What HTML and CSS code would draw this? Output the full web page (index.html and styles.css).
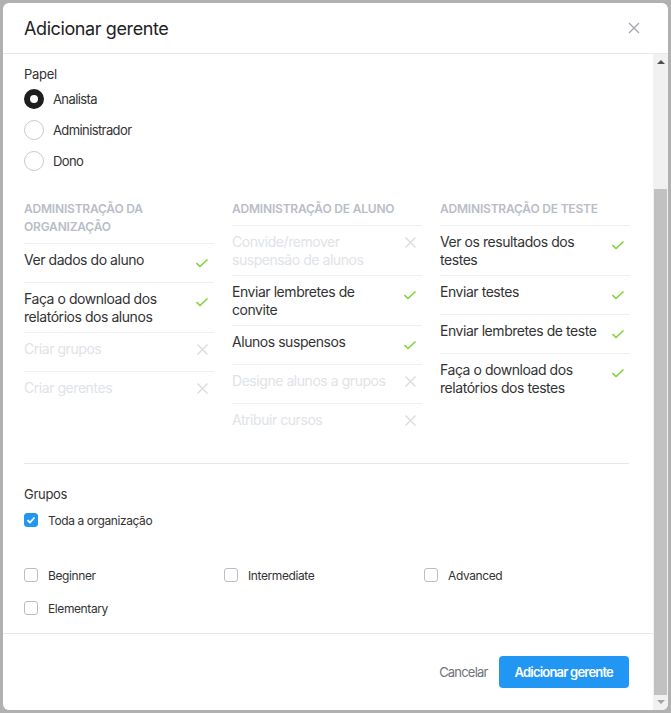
FILE: index.html
```html
<!DOCTYPE html>
<html lang="pt">
<head>
  <meta charset="UTF-8">
  <meta name="viewport" content="width=device-width, initial-scale=1.0">
  <title>Adicionar gerente</title>
  <link rel="stylesheet" href="styles.css">
</head>
<body>
  <div class="modal">
    <div class="modal-header">
      <h2>Adicionar gerente</h2>
      <button class="close" aria-label="Fechar">
        <svg width="12" height="12" viewBox="0 0 12 12"><path d="M1 1L11 11M11 1L1 11" stroke="#a4a9b1" stroke-width="1.4" fill="none"/></svg>
      </button>
    </div>

    <div class="modal-main">
      <div class="modal-body">
        <div class="fields">
          <input type="text" aria-label="Nome">
          <input type="email" aria-label="E-mail">
        </div>

        <div class="role">
          <div class="label">Papel</div>
          <label class="radio checked"><span class="circle"></span>Analista</label>
          <label class="radio"><span class="circle"></span>Administrador</label>
          <label class="radio"><span class="circle"></span>Dono</label>
        </div>

        <div class="permissions">
          <div class="perm-col">
            <div class="perm-title">Administração da organização</div>
            <div class="perm-row"><span>Ver dados do aluno</span><i class="yes"></i></div>
            <div class="perm-row"><span>Faça o download dos relatórios dos alunos</span><i class="yes"></i></div>
            <div class="perm-row off"><span>Criar grupos</span><i class="no"></i></div>
            <div class="perm-row off"><span>Criar gerentes</span><i class="no"></i></div>
          </div>
          <div class="perm-col">
            <div class="perm-title">Administração de aluno</div>
            <div class="perm-row off"><span>Convide/remover suspensão de alunos</span><i class="no"></i></div>
            <div class="perm-row"><span>Enviar lembretes de convite</span><i class="yes"></i></div>
            <div class="perm-row"><span>Alunos suspensos</span><i class="yes"></i></div>
            <div class="perm-row off"><span>Designe alunos a grupos</span><i class="no"></i></div>
            <div class="perm-row off"><span>Atribuir cursos</span><i class="no"></i></div>
          </div>
          <div class="perm-col">
            <div class="perm-title">Administração de teste</div>
            <div class="perm-row"><span>Ver os resultados dos testes</span><i class="yes"></i></div>
            <div class="perm-row"><span>Enviar testes</span><i class="yes"></i></div>
            <div class="perm-row"><span>Enviar lembretes de teste</span><i class="yes"></i></div>
            <div class="perm-row"><span>Faça o download dos relatórios dos testes</span><i class="yes"></i></div>
          </div>
        </div>

        <div class="groups">
          <div class="label">Grupos</div>
          <label class="checkbox checked all"><span class="box"></span>Toda a organização</label>
          <div class="group-list">
            <label class="checkbox"><span class="box"></span>Beginner</label>
            <label class="checkbox"><span class="box"></span>Intermediate</label>
            <label class="checkbox"><span class="box"></span>Advanced</label>
            <label class="checkbox"><span class="box"></span>Elementary</label>
          </div>
        </div>

        <div class="modal-footer">
          <button class="cancel">Cancelar</button>
          <button class="submit">Adicionar gerente</button>
        </div>
      </div>

      <div class="scrollbar">
        <span class="arrow up"></span>
        <div class="track"><div class="thumb"></div></div>
        <span class="arrow down"></span>
      </div>
    </div>
  </div>

  <script src="script.js"></script>
</body>
</html>
```

FILE: styles.css
```css
* {
  box-sizing: border-box;
}

body {
  font-family: Inter, "Liberation Sans", sans-serif;
  margin: 0;
  padding: 3px;
  background-color: #b1b1b1;
  color: #333;
  height: 713px;
  overflow: hidden;
}

.modal {
  width: 665px;
  height: 707px;
  background: #fff;
  border-radius: 6px;
  display: flex;
  flex-direction: column;
  overflow: hidden;
}

.modal-header {
  height: 51px;
  flex-shrink: 0;
  display: flex;
  align-items: center;
  justify-content: space-between;
  padding: 0 28px 0 21px;
  border-bottom: 1px solid #e6e7ea;
}

.modal-header h2 {
  margin: 0;
  font-size: 18px;
  font-weight: 400;
  letter-spacing: -0.4px;
  color: #222;
}

.close {
  background: none;
  border: none;
  padding: 0;
  cursor: pointer;
  display: flex;
}

.modal-main {
  flex: 1;
  min-height: 0;
  display: flex;
}

.modal-body {
  flex: 1;
  overflow-y: scroll;
  scrollbar-width: none;
  padding: 0 0 0 21px;
}

.modal-body::-webkit-scrollbar {
  display: none;
}

/* drawn scrollbar, like the desktop one */
.scrollbar {
  width: 15px;
  flex-shrink: 0;
  background: #f1f1f1;
  display: flex;
  flex-direction: column;
}

.scrollbar .arrow {
  height: 15px;
  flex-shrink: 0;
  background-repeat: no-repeat;
  background-position: center;
}

.scrollbar .up {
  background-image: url("data:image/svg+xml,%3Csvg xmlns='http://www.w3.org/2000/svg' width='8' height='5' viewBox='0 0 8 5'%3E%3Cpath d='M0 5L4 1L8 5Z' fill='%23505050'/%3E%3C/svg%3E");
}

.scrollbar .down {
  background-image: url("data:image/svg+xml,%3Csvg xmlns='http://www.w3.org/2000/svg' width='8' height='5' viewBox='0 0 8 5'%3E%3Cpath d='M0 0L4 4L8 0Z' fill='%23a3a3a3'/%3E%3C/svg%3E");
}

.scrollbar .track {
  flex: 1;
}

.scrollbar .thumb {
  margin: 0 1px;
  background: #c1c1c1;
}

.fields {
  padding: 20px 24px 0 0;
  margin-bottom: 14px;
}

.fields input {
  display: block;
  width: 100%;
  height: 38px;
  margin-bottom: 35px;
  border: 1px solid #d5d8dd;
  border-radius: 4px;
}

.label {
  font-size: 13px;
  line-height: 18px;
  letter-spacing: -0.3px;
  color: #333;
}

.radio {
  display: flex;
  align-items: center;
  height: 31px;
  font-size: 13px;
  letter-spacing: -0.6px;
  color: #333;
}

.radio .circle {
  width: 20px;
  height: 20px;
  border-radius: 50%;
  border: 1px solid #c6cad1;
  margin-right: 9px;
}

.radio.checked .circle {
  border: 6px solid #1e1e1e;
}

.permissions {
  display: grid;
  grid-template-columns: repeat(3, 190px);
  column-gap: 18px;
  align-items: start;
  margin-top: 24px;
  margin-right: 24px;
  padding-bottom: 21px;
  border-bottom: 1px solid #e6e7ea;
}

.perm-title {
  font-size: 12px;
  line-height: 18px;
  font-weight: 600;
  text-transform: uppercase;
  letter-spacing: -0.2px;
  color: #b9bdc6;
  padding-bottom: 7px;
}

.perm-row {
  display: flex;
  align-items: flex-start;
  justify-content: space-between;
  padding: 7px 0;
  border-top: 1px solid #eeeff1;
  font-size: 14px;
  line-height: 17.5px;
  letter-spacing: -0.45px;
  color: #333;
}

.perm-row span {
  flex: 1;
  padding-right: 2px;
}

.perm-row.off {
  color: #e0e3e7;
}

.perm-row i {
  width: 24px;
  height: 24px;
  flex-shrink: 0;
  background-repeat: no-repeat;
}

.perm-row i.yes {
  background-image: url("data:image/svg+xml,%3Csvg xmlns='http://www.w3.org/2000/svg' width='14' height='14' viewBox='0 0 14 14'%3E%3Cpath d='M1.5 7.2L5 10.5L12.5 3.5' stroke='%237ed43a' stroke-width='1.6' fill='none'/%3E%3C/svg%3E");
  background-position: 5px 5px;
}

.perm-row i.no {
  background-image: url("data:image/svg+xml,%3Csvg xmlns='http://www.w3.org/2000/svg' width='11' height='11' viewBox='0 0 11 11'%3E%3Cpath d='M0.5 0.5L10.5 10.5M10.5 0.5L0.5 10.5' stroke='%23d9dce1' stroke-width='1.4' fill='none'/%3E%3C/svg%3E");
  background-position: 7px 4px;
}

.groups {
  padding-top: 21px;
  padding-bottom: 16px;
}

.checkbox {
  display: flex;
  align-items: center;
  height: 18px;
  font-size: 12px;
  letter-spacing: -0.4px;
  color: #333;
}

.checkbox .box {
  width: 14px;
  height: 14px;
  border: 1px solid #b9bdc5;
  border-radius: 3px;
  margin-right: 10px;
  flex-shrink: 0;
}

.checkbox.checked .box {
  border-color: #2196f3;
  background: #2196f3 url("data:image/svg+xml,%3Csvg xmlns='http://www.w3.org/2000/svg' width='10' height='10' viewBox='0 0 10 10'%3E%3Cpath d='M1.5 5.2L4 7.5L8.5 2.5' stroke='%23fff' stroke-width='1.8' fill='none'/%3E%3C/svg%3E") no-repeat center;
}

.checkbox.all {
  margin-top: 8px;
}

.group-list {
  display: grid;
  grid-template-columns: repeat(3, 200px);
  row-gap: 15px;
  margin-top: 37px;
}

.modal-footer {
  display: flex;
  justify-content: flex-end;
  align-items: center;
  margin-left: -21px;
  padding: 22px 24px 22px 0;
  border-top: 1px solid #e6e7ea;
}

.modal-footer button {
  font-family: inherit;
  font-size: 13px;
  height: 32px;
  border: none;
  cursor: pointer;
}

.cancel {
  background: none;
  color: #6e737c;
  padding: 0 11px;
  letter-spacing: -0.8px;
}

.submit {
  background-color: #2196f3;
  color: #fff;
  font-weight: 600;
  padding: 0 16px;
  border-radius: 4px;
  letter-spacing: -0.8px;
}
```

FILE: script.js
```js
const body = document.querySelector('.modal-body');
const track = document.querySelector('.scrollbar .track');
const thumb = document.querySelector('.scrollbar .thumb');

function updateThumb() {
  const h = track.clientHeight;
  thumb.style.height = (h * body.clientHeight / body.scrollHeight) + 'px';
  thumb.style.marginTop = (h * body.scrollTop / body.scrollHeight) + 'px';
}

body.scrollTop = body.scrollHeight; // show the end of the form
updateThumb();
body.addEventListener('scroll', updateThumb);
```
